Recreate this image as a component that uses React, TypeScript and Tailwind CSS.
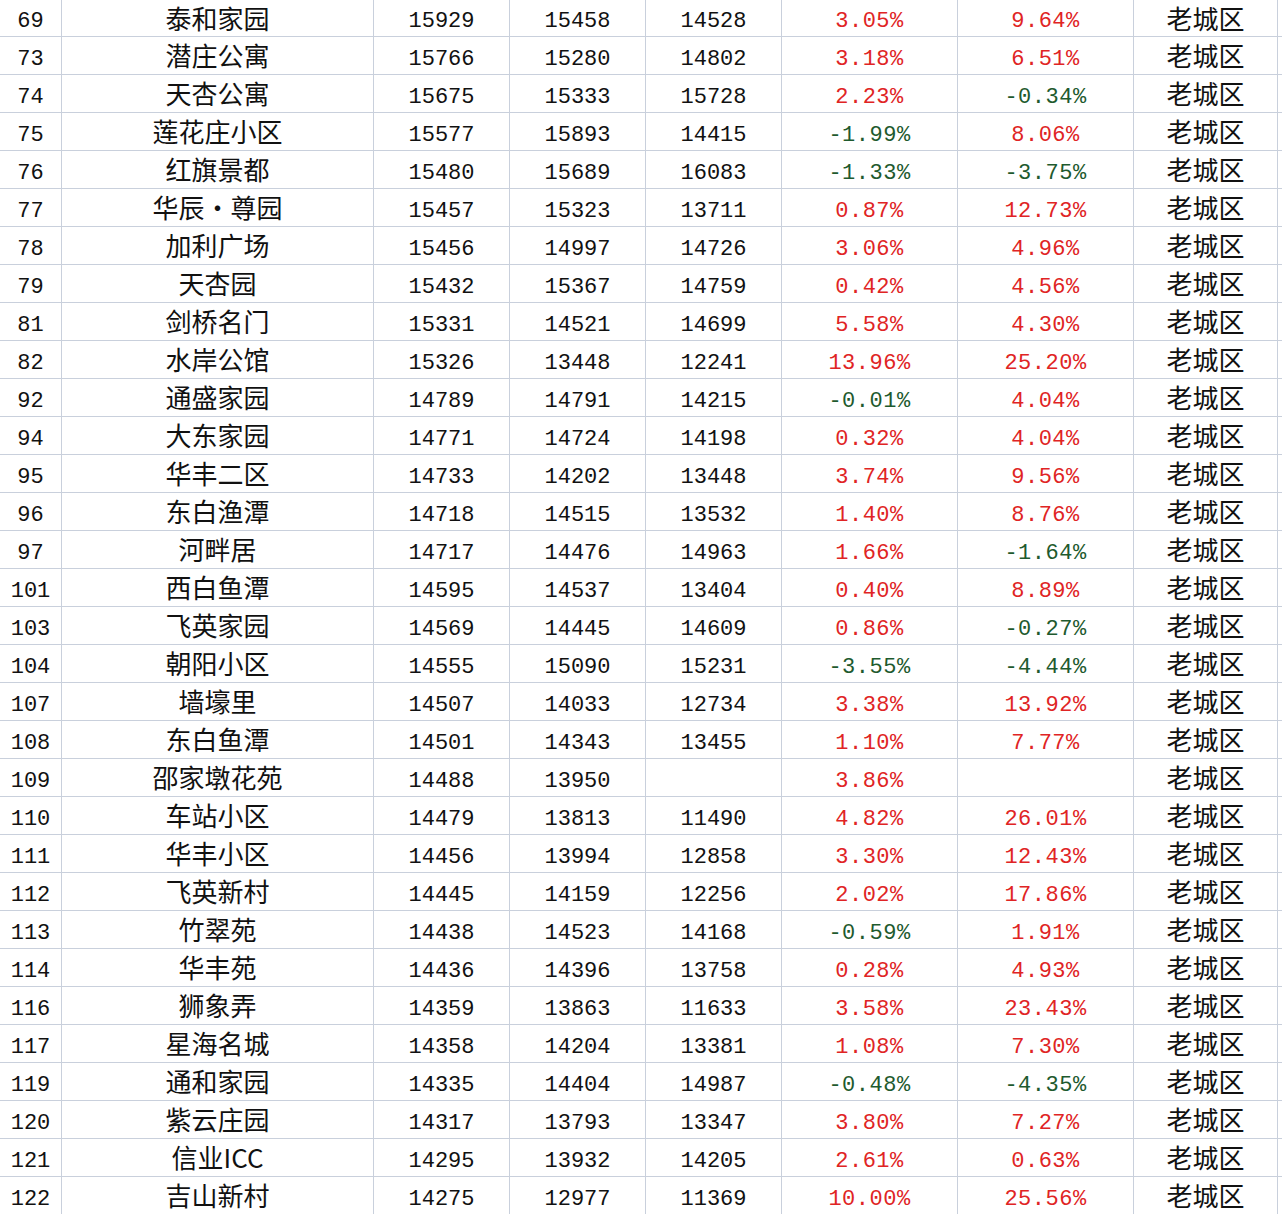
import React from "react";

type Row = [string, string, string, string, string, string, string];

const rows: Row[] = [
  ["69", "泰和家园", "15929", "15458", "14528", "3.05%", "9.64%"],
  ["73", "潜庄公寓", "15766", "15280", "14802", "3.18%", "6.51%"],
  ["74", "天杏公寓", "15675", "15333", "15728", "2.23%", "-0.34%"],
  ["75", "莲花庄小区", "15577", "15893", "14415", "-1.99%", "8.06%"],
  ["76", "红旗景都", "15480", "15689", "16083", "-1.33%", "-3.75%"],
  ["77", "华辰・尊园", "15457", "15323", "13711", "0.87%", "12.73%"],
  ["78", "加利广场", "15456", "14997", "14726", "3.06%", "4.96%"],
  ["79", "天杏园", "15432", "15367", "14759", "0.42%", "4.56%"],
  ["81", "剑桥名门", "15331", "14521", "14699", "5.58%", "4.30%"],
  ["82", "水岸公馆", "15326", "13448", "12241", "13.96%", "25.20%"],
  ["92", "通盛家园", "14789", "14791", "14215", "-0.01%", "4.04%"],
  ["94", "大东家园", "14771", "14724", "14198", "0.32%", "4.04%"],
  ["95", "华丰二区", "14733", "14202", "13448", "3.74%", "9.56%"],
  ["96", "东白渔潭", "14718", "14515", "13532", "1.40%", "8.76%"],
  ["97", "河畔居", "14717", "14476", "14963", "1.66%", "-1.64%"],
  ["101", "西白鱼潭", "14595", "14537", "13404", "0.40%", "8.89%"],
  ["103", "飞英家园", "14569", "14445", "14609", "0.86%", "-0.27%"],
  ["104", "朝阳小区", "14555", "15090", "15231", "-3.55%", "-4.44%"],
  ["107", "墙壕里", "14507", "14033", "12734", "3.38%", "13.92%"],
  ["108", "东白鱼潭", "14501", "14343", "13455", "1.10%", "7.77%"],
  ["109", "邵家墩花苑", "14488", "13950", "", "3.86%", ""],
  ["110", "车站小区", "14479", "13813", "11490", "4.82%", "26.01%"],
  ["111", "华丰小区", "14456", "13994", "12858", "3.30%", "12.43%"],
  ["112", "飞英新村", "14445", "14159", "12256", "2.02%", "17.86%"],
  ["113", "竹翠苑", "14438", "14523", "14168", "-0.59%", "1.91%"],
  ["114", "华丰苑", "14436", "14396", "13758", "0.28%", "4.93%"],
  ["116", "狮象弄", "14359", "13863", "11633", "3.58%", "23.43%"],
  ["117", "星海名城", "14358", "14204", "13381", "1.08%", "7.30%"],
  ["119", "通和家园", "14335", "14404", "14987", "-0.48%", "-4.35%"],
  ["120", "紫云庄园", "14317", "13793", "13347", "3.80%", "7.27%"],
  ["121", "信业ICC", "14295", "13932", "14205", "2.61%", "0.63%"],
  ["122", "吉山新村", "14275", "12977", "11369", "10.00%", "25.56%"],
];

const base =
  "flex items-center justify-center border-r border-b border-[#c9d0dc] overflow-hidden whitespace-nowrap";
const monoCell = `${base} pt-[7px]`;
const cjkCell = `${base} pb-[2px]`;
const mono = "font-['Liberation_Mono','DejaVu_Sans_Mono',monospace] text-[22px] text-[#111]";
const cjk = "font-['Noto_Sans_CJK_SC','Noto_Sans',sans-serif] text-[26px] text-[#111]";

function Pct({ v }: { v: string }) {
  if (!v) return <span />;
  const neg = v.startsWith("-");
  return (
    <span
      className={
        neg
          ? "font-['Liberation_Mono','DejaVu_Sans_Mono',monospace] text-[22px] text-[#1e5a2e] tracking-[0.5px]"
          : "font-['Liberation_Mono','DejaVu_Sans_Mono',monospace] text-[22px] text-[#e02424] tracking-[0.5px]"
      }
    >
      {v}
    </span>
  );
}

export default function App() {
  return (
    <div className="w-[1282px] h-[1214px] overflow-hidden bg-white">
      <div className="grid grid-cols-[62px_312px_136px_136px_136px_176px_176px_144px_4px]">
        {rows.map((r, i) => {
          const h = i === 0 ? "h-[37px]" : "h-[38px]";
          return (
            <React.Fragment key={i}>
              <div className={`${monoCell} ${h}`}>
                <span className={mono}>{r[0]}</span>
              </div>
              <div className={`${cjkCell} ${h}`}>
                <span className={cjk}>{r[1]}</span>
              </div>
              <div className={`${monoCell} ${h}`}>
                <span className={mono}>{r[2]}</span>
              </div>
              <div className={`${monoCell} ${h}`}>
                <span className={mono}>{r[3]}</span>
              </div>
              <div className={`${monoCell} ${h}`}>
                <span className={mono}>{r[4]}</span>
              </div>
              <div className={`${monoCell} ${h}`}>
                <Pct v={r[5]} />
              </div>
              <div className={`${monoCell} ${h}`}>
                <Pct v={r[6]} />
              </div>
              <div className={`${cjkCell} ${h}`}>
                <span className={cjk}>老城区</span>
              </div>
              <div className={`border-b border-[#c9d0dc] ${h}`} />
            </React.Fragment>
          );
        })}
      </div>
    </div>
  );
}
